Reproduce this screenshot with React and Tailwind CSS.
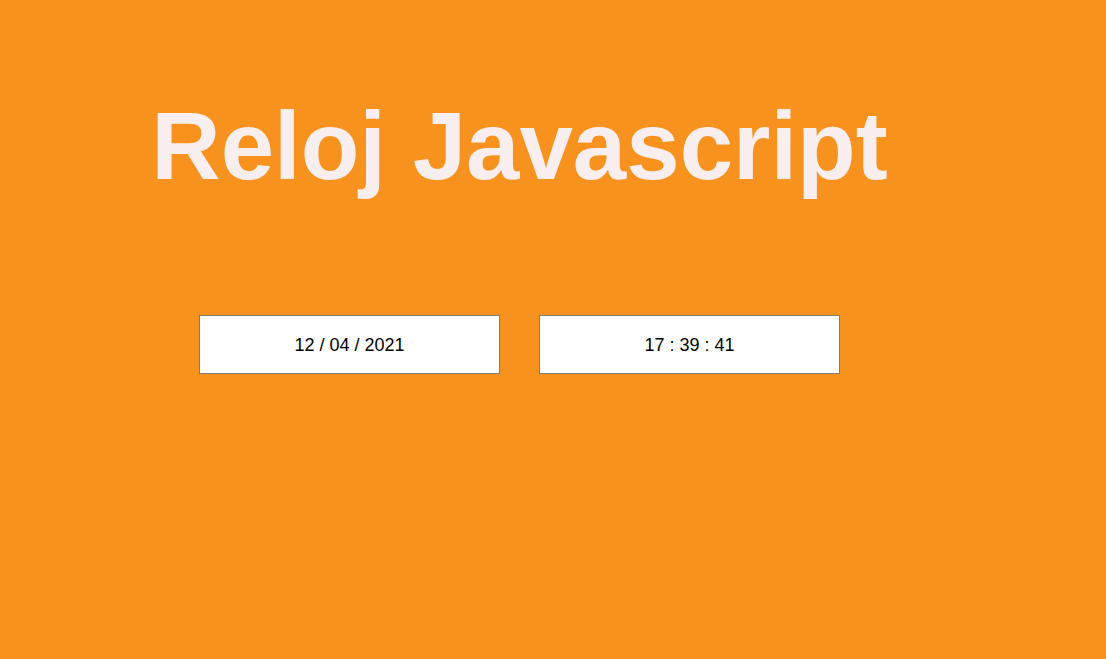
export default function App() {
  return (
    <div className="min-h-screen w-full bg-[#f7921e] font-['Liberation_Sans',Arial,sans-serif]">
      <div className="flex w-[1039px] flex-col items-center pt-[98px]">
        <h1 className="text-[96px] font-bold leading-none text-[#f9eeee]">Reloj Javascript</h1>

        <div className="mt-[121px] flex gap-[39px]">
          <div className="flex h-[59px] w-[301px] items-center justify-center border border-[#7b7b7b] bg-white pt-[2px] text-[18px] text-black">
            12 / 04 / 2021
          </div>
          <div className="flex h-[59px] w-[301px] items-center justify-center border border-[#7b7b7b] bg-white pt-[2px] text-[18px] text-black">
            17 : 39 : 41
          </div>
        </div>
      </div>
    </div>
  );
}
